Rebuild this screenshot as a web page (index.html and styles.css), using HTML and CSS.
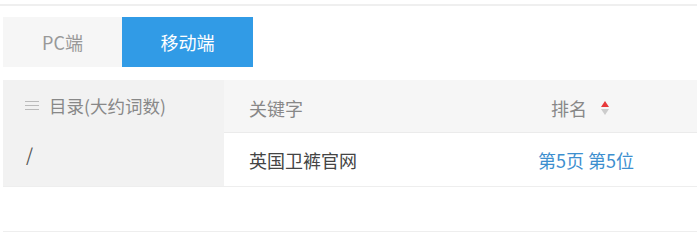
FILE: index.html
```html
<!DOCTYPE html>
<html lang="zh-CN">
<head>
<meta charset="utf-8">
<link rel="stylesheet" href="styles.css">
</head>
<body>
<div class="topline"></div>
<div class="tabs">
  <div class="tab">PC端</div>
  <div class="tab active">移动端</div>
</div>
<div class="table">
  <div class="cell dir head"><span class="menu"><i></i><i></i><i></i></span>目录(大约词数)</div>
  <div class="cell kw head">关键字</div>
  <div class="cell rank head">排名<span class="sort"><i class="up"></i><i class="down"></i></span></div>
  <div class="cell dir body">/</div>
  <div class="cell kw body dark">英国卫裤官网</div>
  <div class="cell rank body link">第5页 第5位</div>
</div>
<div class="bottomline"></div>
</body>
</html>
```
FILE: styles.css
```css
html, body {
  margin: 0;
  padding: 0;
  background: #fff;
}
body {
  width: 700px;
  height: 236px;
  overflow: hidden;
  font-family: "Noto Sans CJK SC", "Microsoft YaHei", sans-serif;
  font-size: 18px;
  color: #777;
}
.topline {
  margin-top: 4px;
  height: 2px;
  width: 697px;
  background: #efefef;
}
.tabs {
  display: flex;
  margin: 11px 0 0 3px;
  height: 50px;
}
.tab {
  width: 119px;
  display: flex;
  align-items: center;
  justify-content: center;
  background: #f6f6f6;
  color: #999;
  font-size: 18px;
}
.tab.active {
  width: 131px;
  background: #319be6;
  color: #fff;
}
.table {
  margin: 13px 0 0 3px;
  width: 694px;
  display: grid;
  grid-template-columns: 221px 246px 1fr;
  grid-template-rows: 53px 53px;
  border-bottom: 1px solid #eeeeee;
}
.cell {
  display: flex;
  align-items: center;
}
.dir {
  background: #f2f2f2;
  padding-left: 21px;
  color: #888;
}
.dir.head {
  padding-left: 22px;
  padding-bottom: 3px;
  font-size: 17.5px;
}
.head.kw, .head.rank {
  background: #f6f6f6;
  border-bottom: 1px solid #ebebeb;
  padding-top: 4px;
}
.kw {
  padding-left: 25px;
}
.rank {
  justify-content: center;
  padding-right: 7px;
}
.head {
  color: #888;
}
.dark {
  color: #444;
}
.link {
  color: #3d8fcf;
  padding-right: 0;
  padding-left: 5px;
}
.dir.body {
  color: #555;
  padding-left: 23px;
  padding-bottom: 12px;
}
.menu {
  display: inline-flex;
  flex-direction: column;
  justify-content: space-between;
  width: 14px;
  height: 9px;
  margin-right: 10px;
}
.menu i {
  display: block;
  height: 1px;
  background: #bbb;
}
.sort {
  display: inline-flex;
  flex-direction: column;
  gap: 2px;
  margin-left: 14px;
}
.sort i {
  display: block;
  width: 0;
  height: 0;
  border-left: 4.5px solid transparent;
  border-right: 4.5px solid transparent;
}
.sort .up {
  border-bottom: 6px solid #e8393a;
}
.sort .down {
  border-top: 6px solid #ccc;
}
.bottomline {
  margin: 44px 0 0 3px;
  width: 694px;
  height: 1px;
  background: #eeeeee;
}
```
